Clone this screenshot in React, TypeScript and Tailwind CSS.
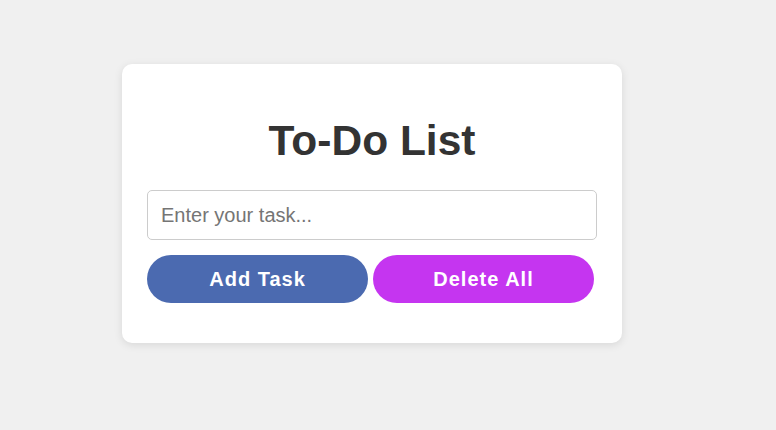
export default function App() {
  return (
    <div className="min-h-[430px] w-full bg-[#f0f0f0] pl-[122px] pt-[64px] font-['Liberation_Sans',Arial,sans-serif]">
      <div className="w-[500px] rounded-[10px] bg-white px-[25px] pt-[53px] pb-[40px] shadow-[0_2px_8px_rgba(0,0,0,0.1)]">
        <h1 className="text-center text-[42.5px] font-bold leading-[47px] text-[#333]">To-Do List</h1>
        <input
          type="text"
          placeholder="Enter your task..."
          className="mt-[26px] block h-[50px] w-[450px] rounded-[5px] border border-[#ccc] px-[13px] text-[20px] text-[#333] outline-none placeholder:text-[#757575]"
        />
        <div className="mt-[15px] flex gap-[5px]">
          <button className="h-[48px] w-[221px] rounded-full bg-[#4b6ab0] text-[20px] font-bold tracking-[1px] text-white">
            Add Task
          </button>
          <button className="h-[48px] w-[221px] rounded-full bg-[#c535f0] text-[20px] font-bold tracking-[1px] text-white">
            Delete All
          </button>
        </div>
      </div>
    </div>
  );
}
